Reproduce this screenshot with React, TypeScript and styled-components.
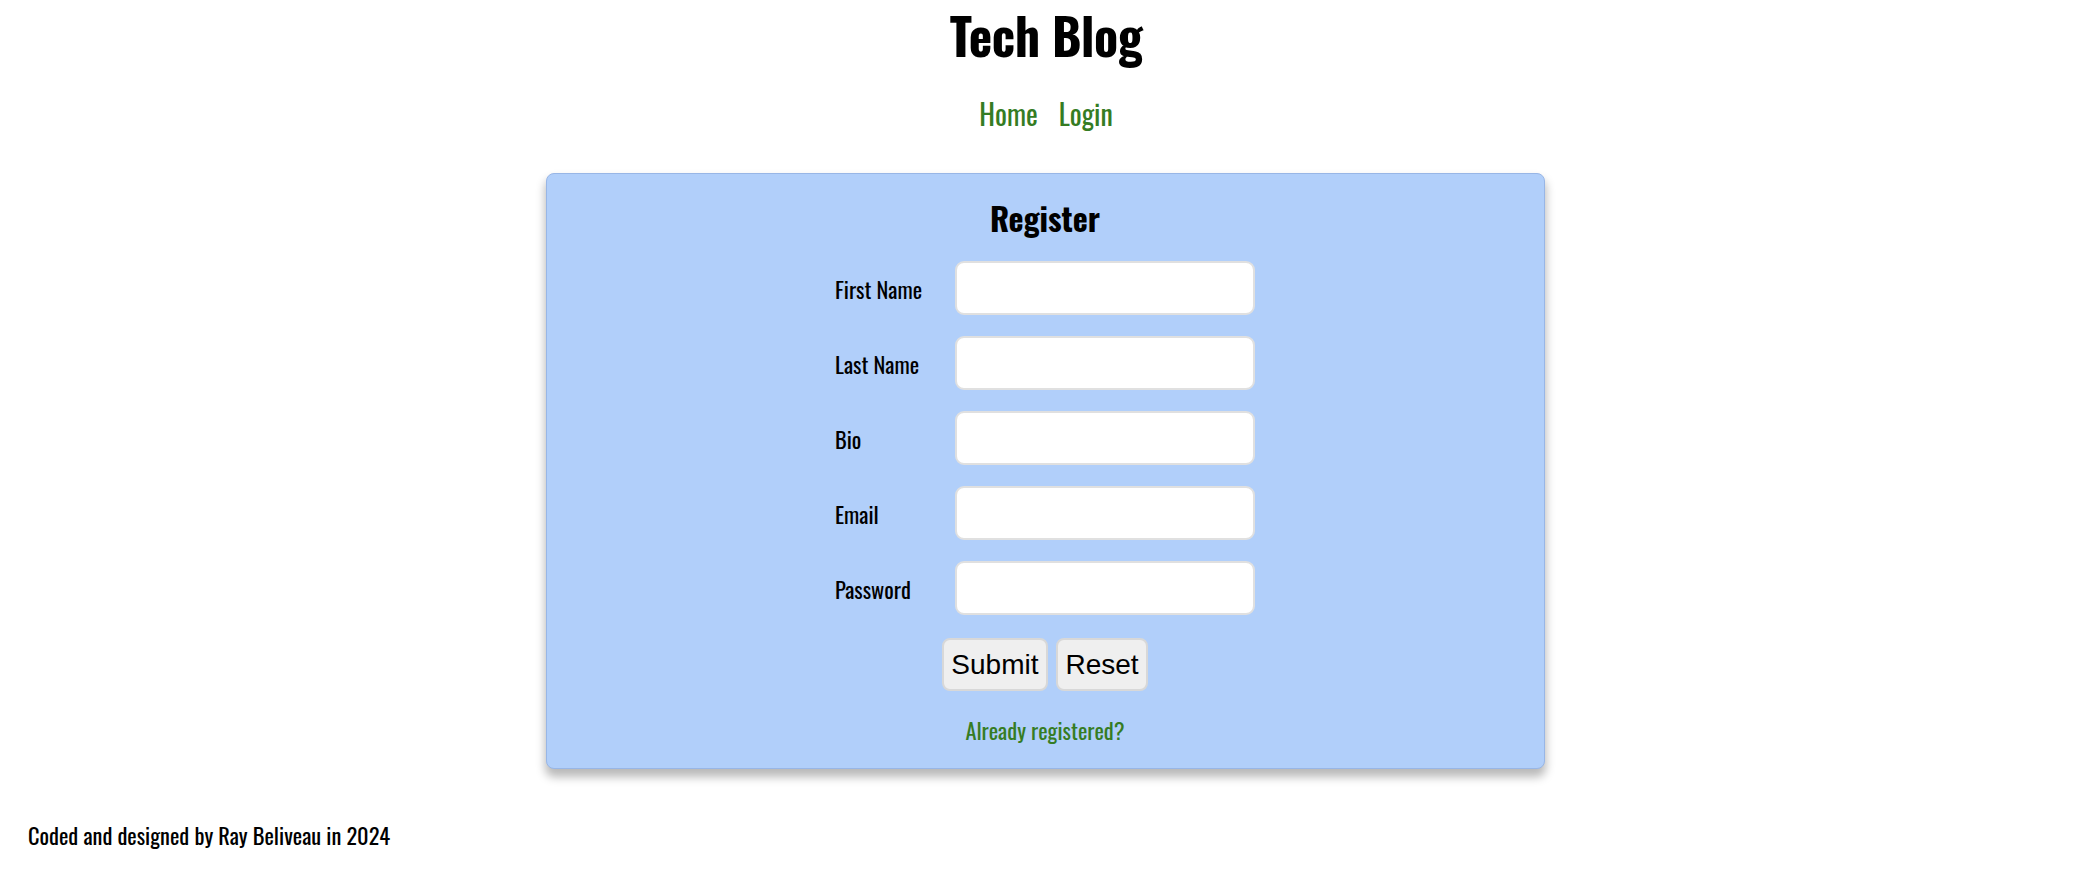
import React from "react";
import styled, { createGlobalStyle } from "styled-components";

const GlobalStyle = createGlobalStyle`
  html, body {
    margin: 0;
    padding: 0;
    background: #ffffff;
  }
  body {
    font-family: "Oswald", "Liberation Sans Narrow", "DejaVu Sans Condensed", "Liberation Sans", sans-serif;
    color: #000;
  }
`;

const HEAD_FONT = `"Oswald", "Liberation Sans Narrow", "DejaVu Sans Condensed", "Liberation Sans", sans-serif`;
const GREEN = "#357c23";

const Page = styled.div`
  display: flex;
  flex-direction: column;
  min-height: 890px;
`;

const Header = styled.header`
  display: flex;
  flex-direction: column;
  align-items: center;
  padding-top: 9px;
`;

const Title = styled.h1`
  margin: 0;
  font-family: ${HEAD_FONT};
  font-size: 50px;
  line-height: 50px;
  font-weight: 700;
  letter-spacing: -0.5px;
`;

const Nav = styled.nav`
  display: flex;
  gap: 21px;
  margin-top: 40.7px;
`;

const NavLink = styled.a`
  font-family: ${HEAD_FONT};
  font-size: 28px;
  line-height: 28px;
  color: ${GREEN};
  text-decoration: none;
`;

const Main = styled.main`
  display: flex;
  justify-content: center;
  margin-top: 45.3px;
  padding-right: 2px;
`;

const Card = styled.section`
  box-sizing: border-box;
  width: 999px;
  background: #b1cffa;
  border: 1px solid #98b6e6;
  border-radius: 8px;
  box-shadow: 0 7px 10px 1px rgba(0, 0, 0, 0.28);
  display: flex;
  flex-direction: column;
  align-items: center;
  padding: 28.5px 0 26px;
`;

const CardTitle = styled.h2`
  margin: 0;
  font-family: ${HEAD_FONT};
  font-size: 32px;
  line-height: 32px;
  font-weight: 700;
`;

const Form = styled.form`
  display: flex;
  flex-direction: column;
  align-items: center;
  margin-top: 27px;
`;

const Fields = styled.div`
  display: grid;
  grid-template-columns: 120px 300px;
  row-gap: 21px;
`;

const Label = styled.label`
  font-family: ${HEAD_FONT};
  font-size: 22.4px;
  line-height: 22.4px;
  padding-top: 16.4px;
`;

const Input = styled.input`
  box-sizing: border-box;
  width: 300px;
  height: 54px;
  border: 2px solid #e0e0e0;
  border-radius: 9px;
  background: #ffffff;
  font-size: 20px;
  padding: 0 10px;
  outline: none;
`;

const Buttons = styled.div`
  display: flex;
  gap: 8px;
  margin-top: 23px;
`;

const Button = styled.button`
  box-sizing: border-box;
  height: 53px;
  padding: 8px 7.5px;
  border: 2px solid #d8d8d8;
  border-radius: 8px;
  background: #efefef;
  font-family: "Liberation Sans", Arial, sans-serif;
  font-size: 28px;
  line-height: 33px;
  color: #000;
`;

const AltLink = styled.a`
  margin-top: 27.7px;
  font-family: ${HEAD_FONT};
  font-size: 22.4px;
  line-height: 22.4px;
  color: ${GREEN};
  text-decoration: none;
`;

const Footer = styled.footer`
  margin-top: 55.7px;
  padding-left: 28px;
  font-family: ${HEAD_FONT};
  font-size: 22.4px;
  line-height: 22.4px;
`;

const fields = [
  { id: "first", label: "First Name", type: "text" },
  { id: "last", label: "Last Name", type: "text" },
  { id: "bio", label: "Bio", type: "text" },
  { id: "email", label: "Email", type: "email" },
  { id: "password", label: "Password", type: "password" },
];

export default function App() {
  return (
    <Page>
      <GlobalStyle />
      <Header>
        <Title>Tech Blog</Title>
        <Nav>
          <NavLink href="#">Home</NavLink>
          <NavLink href="#">Login</NavLink>
        </Nav>
      </Header>
      <Main>
        <Card>
          <CardTitle>Register</CardTitle>
          <Form onSubmit={(e) => e.preventDefault()}>
            <Fields>
              {fields.map((f) => (
                <React.Fragment key={f.id}>
                  <Label htmlFor={f.id}>{f.label}</Label>
                  <Input id={f.id} type={f.type} />
                </React.Fragment>
              ))}
            </Fields>
            <Buttons>
              <Button type="submit">Submit</Button>
              <Button type="reset">Reset</Button>
            </Buttons>
          </Form>
          <AltLink href="#">Already registered?</AltLink>
        </Card>
      </Main>
      <Footer>Coded and designed by Ray Beliveau in 2024</Footer>
    </Page>
  );
}
